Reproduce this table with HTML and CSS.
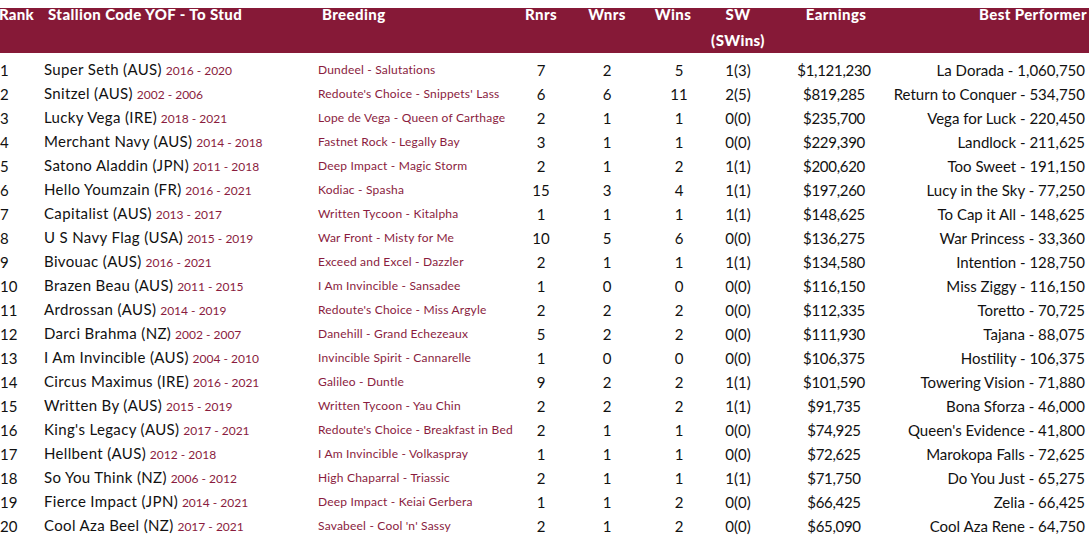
FILE: index.html
```html
<!DOCTYPE html>
<html>
<head>
<meta charset="utf-8">
<link rel="stylesheet" href="styles.css">
</head>
<body>
<div class="table">
  <div class="row head">
    <div class="c rank">Rank</div>
    <div class="c stal">Stallion Code YOF - To Stud</div>
    <div class="c breed">Breeding</div>
    <div class="c num rn">Rnrs</div>
    <div class="c num wn">Wnrs</div>
    <div class="c num wi">Wins</div>
    <div class="c num sw">SW<br>(SWins)</div>
    <div class="c earn">Earnings</div>
    <div class="c best">Best Performer</div>
  </div>
  <div class="body" id="body"></div>
</div>
<script src="app.js"></script>
</body>
</html>
```

FILE: app.js
```js
const rows = [
["1","Super Seth (AUS)","2016 - 2020","Dundeel - Salutations","7","2","5","1(3)","$1,121,230","La Dorada - 1,060,750"],
["2","Snitzel (AUS)","2002 - 2006","Redoute's Choice - Snippets' Lass","6","6","11","2(5)","$819,285","Return to Conquer - 534,750"],
["3","Lucky Vega (IRE)","2018 - 2021","Lope de Vega - Queen of Carthage","2","1","1","0(0)","$235,700","Vega for Luck - 220,450"],
["4","Merchant Navy (AUS)","2014 - 2018","Fastnet Rock - Legally Bay","3","1","1","0(0)","$229,390","Landlock - 211,625"],
["5","Satono Aladdin (JPN)","2011 - 2018","Deep Impact - Magic Storm","2","1","2","1(1)","$200,620","Too Sweet - 191,150"],
["6","Hello Youmzain (FR)","2016 - 2021","Kodiac - Spasha","15","3","4","1(1)","$197,260","Lucy in the Sky - 77,250"],
["7","Capitalist (AUS)","2013 - 2017","Written Tycoon - Kitalpha","1","1","1","1(1)","$148,625","To Cap it All - 148,625"],
["8","U S Navy Flag (USA)","2015 - 2019","War Front - Misty for Me","10","5","6","0(0)","$136,275","War Princess - 33,360"],
["9","Bivouac (AUS)","2016 - 2021","Exceed and Excel - Dazzler","2","1","1","1(1)","$134,580","Intention - 128,750"],
["10","Brazen Beau (AUS)","2011 - 2015","I Am Invincible - Sansadee","1","0","0","0(0)","$116,150","Miss Ziggy - 116,150"],
["11","Ardrossan (AUS)","2014 - 2019","Redoute's Choice - Miss Argyle","2","2","2","0(0)","$112,335","Toretto - 70,725"],
["12","Darci Brahma (NZ)","2002 - 2007","Danehill - Grand Echezeaux","5","2","2","0(0)","$111,930","Tajana - 88,075"],
["13","I Am Invincible (AUS)","2004 - 2010","Invincible Spirit - Cannarelle","1","0","0","0(0)","$106,375","Hostility - 106,375"],
["14","Circus Maximus (IRE)","2016 - 2021","Galileo - Duntle","9","2","2","1(1)","$101,590","Towering Vision - 71,880"],
["15","Written By (AUS)","2015 - 2019","Written Tycoon - Yau Chin","2","2","2","1(1)","$91,735","Bona Sforza - 46,000"],
["16","King's Legacy (AUS)","2017 - 2021","Redoute's Choice - Breakfast in Bed","2","1","1","0(0)","$74,925","Queen's Evidence - 41,800"],
["17","Hellbent (AUS)","2012 - 2018","I Am Invincible - Volkaspray","1","1","1","0(0)","$72,625","Marokopa Falls - 72,625"],
["18","So You Think (NZ)","2006 - 2012","High Chaparral - Triassic","2","1","1","1(1)","$71,750","Do You Just - 65,275"],
["19","Fierce Impact (JPN)","2014 - 2021","Deep Impact - Keiai Gerbera","1","1","2","0(0)","$66,425","Zelia - 66,425"],
["20","Cool Aza Beel (NZ)","2017 - 2021","Savabeel - Cool 'n' Sassy","2","1","2","0(0)","$65,090","Cool Aza Rene - 64,750"]
];
const body = document.getElementById('body');
for (const r of rows) {
  const row = document.createElement('div');
  row.className = 'row data';
  const cells = [
    ['rank', r[0]],
    ['stal', null],
    ['breed', r[3]],
    ['num rn', r[4]],
    ['num wn', r[5]],
    ['num wi', r[6]],
    ['num sw', r[7]],
    ['earn', r[8]],
    ['best', r[9]]
  ];
  for (const [cls, txt] of cells) {
    const d = document.createElement('div');
    d.className = 'c ' + cls;
    if (cls === 'stal') {
      const n = document.createElement('span');
      n.className = 'name';
      n.textContent = r[1];
      d.appendChild(n);
      d.appendChild(document.createTextNode(' '));
      const y = document.createElement('span');
      y.className = 'yrs';
      y.textContent = r[2];
      d.appendChild(y);
    } else {
      d.textContent = txt;
    }
    row.appendChild(d);
  }
  body.appendChild(row);
}
```

FILE: styles.css
```css
html, body {
  margin: 0;
  padding: 0;
  background: #ffffff;
}
body {
  font-family: Lato, "Liberation Sans", sans-serif;
  color: #111111;
}
.table {
  padding-top: 8px;
  width: 1089px;
}
.row {
  display: grid;
  grid-template-columns: 44px 274px 197px 52px 80px 64px 54px 113px 1fr;
  padding-right: 4px;
  white-space: nowrap;
}
.head {
  height: 45px;
  background: #861937;
  color: #ffffff;
  font-weight: 900;
  font-size: 15px;
  letter-spacing: 0.4px;
  line-height: 26px;
  align-items: start;
}
.head .c {
  margin-top: -7px;
}
.head .rank {
  letter-spacing: 0.2px;
  margin-left: -1px;
}
.head .stal, .head .breed {
  padding-left: 4px;
}
.head .wi {
  padding-right: 12px;
}
.head .earn {
  padding-left: 29px;
}
.head .best {
  margin-right: -2px;
}
.body {
  padding-top: 4px;
}
.data {
  height: 24px;
  line-height: 24px;
  font-size: 15px;
  align-items: center;
}
.name {
  letter-spacing: 0.35px;
}
.num {
  text-align: center;
}
.earn {
  text-align: center;
  padding-left: 25px;
}
.data .earn {
  letter-spacing: -0.3px;
}
.best {
  display: flex;
  justify-content: flex-end;
}
.yrs, .data .breed {
  color: #8a1c3e;
  font-size: 12px;
}
.data .breed {
  letter-spacing: 0.2px;
}
```
